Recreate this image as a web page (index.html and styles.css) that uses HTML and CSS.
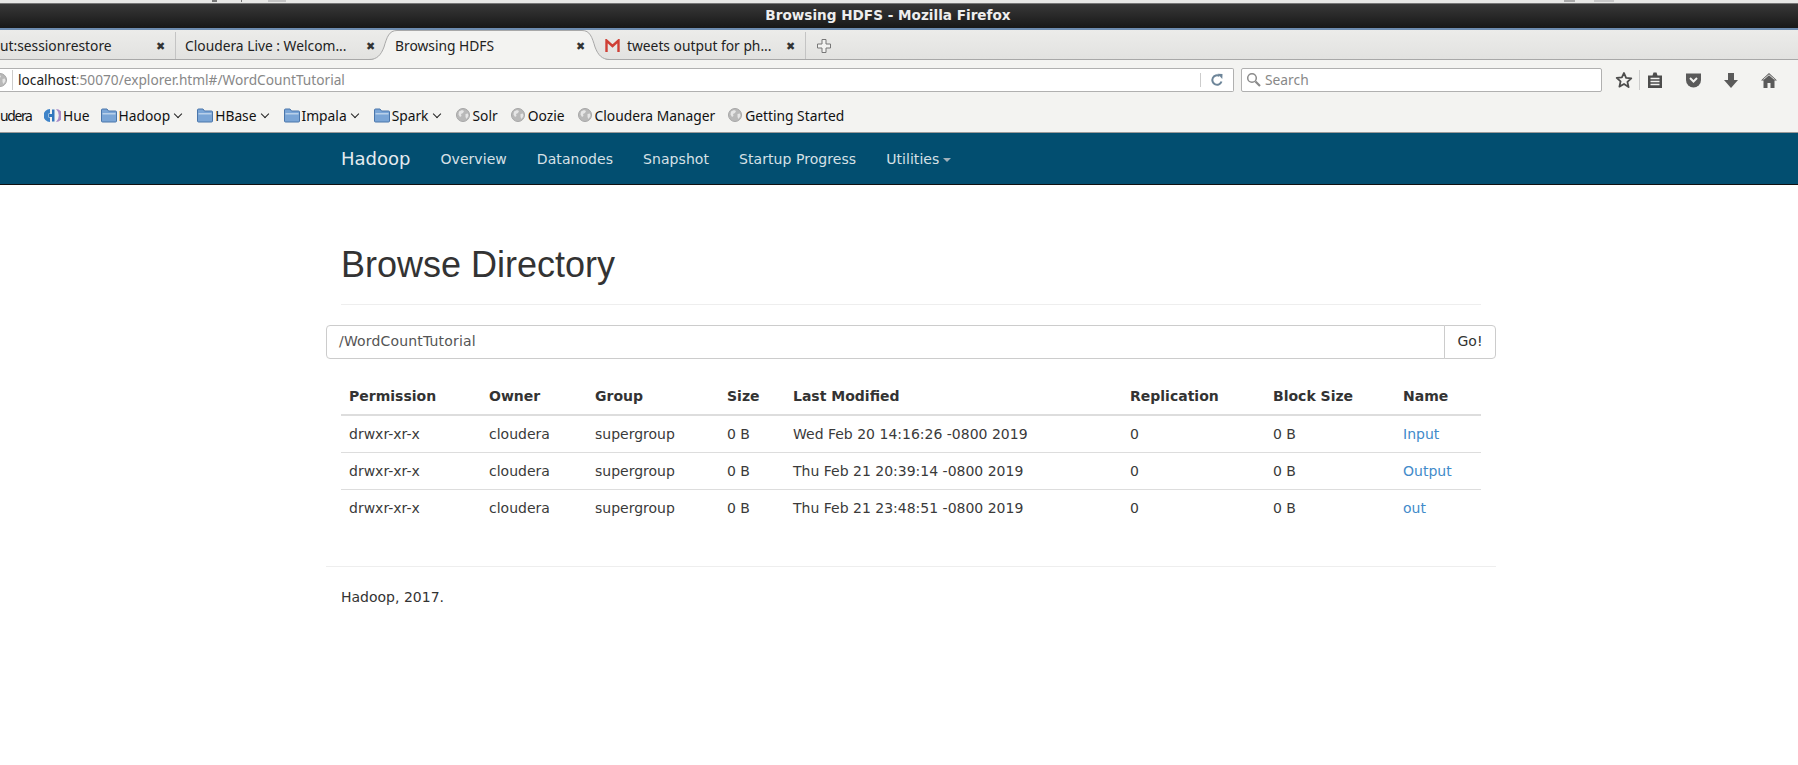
FILE: index.html
```html
<!DOCTYPE html>
<html lang="en">
<head>
    <meta charset="UTF-8">
    <meta name="viewport" content="width=device-width, initial-scale=1.0">
    <title>Browsing HDFS</title>
    <link rel="stylesheet" href="styles.css">
</head>
<body>
    <svg class="defs" width="0" height="0">
        <symbol id="globe" viewBox="0 0 14 14">
            <circle cx="7" cy="7" r="6.500" fill="#b9b9b9" stroke="#a6a6a6"/>
            <path d="M3 3.500l3-1.500 2 1-1 2-2 1 .5 2-1.500 1-1.500-2.500zM9.500 6l2.500-.5.5 2.500-2 3-1-2z" fill="#e6e6e6"/>
        </symbol>
        <symbol id="folder" viewBox="0 0 16 15">
            <path d="M.5 13V2q0-1 1-1h4.500l1.500 2h7q1 0 1 1v9q0 1-1 1h-13q-1 0-1-1z" fill="#7aa5d6" stroke="#4a76ab"/>
            <path d="M1.500 5h13v1.500h-13z" fill="#b9d0ea"/>
        </symbol>
    </svg>

    <!-- Window chrome -->
    <div class="top-strip">
        <span class="bit bit-a"></span>
        <span class="bit bit-b"></span>
        <span class="bit bit-c"></span>
        <span class="bit bit-d"></span>
        <span class="bit bit-e"></span>
    </div>
    <div class="titlebar">Browsing HDFS - Mozilla Firefox</div>

    <!-- Tabs -->
    <div class="tabbar">
        <div class="tab tab-first"><span class="tab-label">ut:sessionrestore</span><span class="tab-close">&#10006;</span></div>
        <div class="tab tab-second"><span class="tab-label">Cloudera Live : Welcom...</span><span class="tab-close">&#10006;</span></div>
        <div class="tab tab-active">
            <svg class="tab-curve" width="241" height="30" viewBox="0 0 241 30">
                <path d="M0 30 C8 30 12 25 15 17 C18 7 20 .5 28 .5 H213 C221 .5 223 7 226 17 C229 25 233 30 241 30z" fill="#f3f3f1"/>
                <path d="M0 29.500 C8 29.500 12 25 15 17 C18 7 20 .5 28 .5 H213 C221 .5 223 7 226 17 C229 25 233 29.500 241 29.500" fill="none" stroke="#a8a8a8"/>
            </svg>
            <span class="tab-label">Browsing HDFS</span><span class="tab-close">&#10006;</span>
        </div>
        <div class="tab tab-last">
            <svg class="gmail" width="15" height="13" viewBox="0 0 15 13"><path d="M1.500 13V1.500L7.500 7l6-5.500V13" fill="none" stroke="#cf3f35" stroke-width="2.400"/></svg>
            <span class="tab-label">tweets output for ph...</span><span class="tab-close">&#10006;</span>
        </div>
        <div class="tab-new">
            <svg width="14" height="14" viewBox="0 0 14 14"><path d="M5 .5h4v4.500h4.500v4H9v4.500H5V9H.5V5H5z" fill="#f3f3f1" stroke="#777"/></svg>
        </div>
    </div>

    <!-- Address bar -->
    <div class="toolbar">
        <div class="urlbar">
            <svg class="globe-url" width="14" height="14"><use href="#globe"/></svg>
            <span class="url-text">localhost<span class="url-rest">:50070/explorer.html#/WordCountTutorial</span></span>
            <span class="reload">
                <svg width="14" height="14" viewBox="0 0 14 14"><path d="M11.500 8.500A4.700 4.700 0 1 1 9.500 3" fill="none" stroke="#6d8599" stroke-width="2"/><path d="M7.500 .8l5 .2-.2 5z" fill="#6d8599"/></svg>
            </span>
        </div>
        <div class="searchbar">
            <svg width="15" height="15" viewBox="0 0 15 15"><circle cx="6" cy="6" r="4.300" fill="none" stroke="#8a8a8a" stroke-width="1.500"/><path d="M9.500 9.500l4.500 4.500" stroke="#8a8a8a" stroke-width="2.200"/></svg>
            <span class="search-text">Search</span>
        </div>
        <div class="tool-icons">
            <svg class="icon-star" width="18" height="18" viewBox="0 0 18 18"><path d="M9 2l2.100 4.900 5.200.5-3.900 3.500 1.200 5.200L9 13l-4.600 2.600 1.200-5.200-3.900-3.500 5.200-.5z" fill="none" stroke="#4c4c4c" stroke-width="1.800" stroke-linejoin="round"/></svg>
            <span class="tool-sep"></span>
            <svg class="icon-list" width="16" height="18" viewBox="0 0 16 18"><path d="M1 4.500h4.500L6.500 1.500h3l1 3H15V17H1z" fill="#4c4c4c"/><path d="M3.500 7.500h9M3.500 10.500h9M3.500 13.500h9" stroke="#f3f3f1" stroke-width="1.300"/></svg>
            <svg class="icon-pocket" width="17" height="16" viewBox="0 0 17 16"><path d="M1 1.500h15V8a7.500 7.500 0 0 1-15 0z" fill="#5a5a5a"/><path d="M5 6l3.500 3.500L12 6" fill="none" stroke="#f3f3f1" stroke-width="2"/></svg>
            <svg class="icon-down" width="16" height="17" viewBox="0 0 16 17"><path d="M5 1h6v7h4l-7 8-7-8h4z" fill="#5a5a5a"/></svg>
            <svg class="icon-home" width="18" height="17" viewBox="0 0 18 17"><path d="M9 1L1 8.500h2.500V16h4v-5h3v5h4V8.500H17z" fill="#5a5a5a"/><path d="M3.500 7.500L9 2.800l5.500 4.700" fill="none" stroke="#f3f3f1" stroke-width=".9"/></svg>
        </div>
    </div>

    <!-- Bookmarks -->
    <div class="bookmarks">
        <span class="bm bm-cut">udera</span>
        <span class="bm bm-hue">
            <svg width="17" height="15" viewBox="0 0 17 15"><path d="M6 1A6.500 6.500 0 0 0 6 14V9.500H4.500v-4H6z" fill="#3d83c9"/><path d="M8 1.500h2.500v12H8zM5 6h4v3H5z" fill="#3277bd"/><path d="M12 1a6.500 6.500 0 0 1 0 13 9 9 0 0 0 0-13z" fill="#a98ac7"/></svg>
            Hue
        </span>
        <span class="bm"><svg class="folder" width="16" height="15"><use href="#folder"/></svg>Hadoop<span class="chev"></span></span>
        <span class="bm"><svg class="folder" width="16" height="15"><use href="#folder"/></svg>HBase<span class="chev"></span></span>
        <span class="bm"><svg class="folder" width="16" height="15"><use href="#folder"/></svg>Impala<span class="chev"></span></span>
        <span class="bm"><svg class="folder" width="16" height="15"><use href="#folder"/></svg>Spark<span class="chev"></span></span>
        <span class="bm bm-site"><svg width="14" height="14"><use href="#globe"/></svg>Solr</span>
        <span class="bm bm-site"><svg width="14" height="14"><use href="#globe"/></svg>Oozie</span>
        <span class="bm bm-site"><svg width="14" height="14"><use href="#globe"/></svg>Cloudera Manager</span>
        <span class="bm bm-site"><svg width="14" height="14"><use href="#globe"/></svg>Getting Started</span>
    </div>

    <!-- Hadoop navbar -->
    <nav class="navbar">
        <div class="nav-inner">
            <a class="brand">Hadoop</a>
            <a class="nav-link">Overview</a>
            <a class="nav-link">Datanodes</a>
            <a class="nav-link">Snapshot</a>
            <a class="nav-link">Startup Progress</a>
            <a class="nav-link">Utilities <span class="caret"></span></a>
        </div>
    </nav>

    <div class="container">
        <div class="page-header">
            <h1>Browse Directory</h1>
        </div>

        <div class="input-group">
            <div class="path-input">/WordCountTutorial</div>
            <button class="go-btn">Go!</button>
        </div>

        <table class="files">
            <thead>
                <tr>
                    <th class="c-perm">Permission</th>
                    <th class="c-owner">Owner</th>
                    <th class="c-group">Group</th>
                    <th class="c-size">Size</th>
                    <th class="c-date">Last Modified</th>
                    <th class="c-repl">Replication</th>
                    <th class="c-block">Block Size</th>
                    <th class="c-name">Name</th>
                </tr>
            </thead>
            <tbody>
                <tr>
                    <td>drwxr-xr-x</td><td>cloudera</td><td>supergroup</td><td>0 B</td>
                    <td>Wed Feb 20 14:16:26 -0800 2019</td><td>0</td><td>0 B</td><td><a>Input</a></td>
                </tr>
                <tr>
                    <td>drwxr-xr-x</td><td>cloudera</td><td>supergroup</td><td>0 B</td>
                    <td>Thu Feb 21 20:39:14 -0800 2019</td><td>0</td><td>0 B</td><td><a>Output</a></td>
                </tr>
                <tr>
                    <td>drwxr-xr-x</td><td>cloudera</td><td>supergroup</td><td>0 B</td>
                    <td>Thu Feb 21 23:48:51 -0800 2019</td><td>0</td><td>0 B</td><td><a>out</a></td>
                </tr>
            </tbody>
        </table>

        <hr class="foot-line">
        <p class="footer">Hadoop, 2017.</p>
    </div>
</body>
</html>
```

FILE: styles.css
```css
* {
    box-sizing: border-box;
}
body {
    margin: 0;
    height: 765px;
    overflow: hidden;
    background: white;
    font-family: "DejaVu Sans", sans-serif;
    font-size: 14px;
    color: #333;
}
.defs {
    display: block;
    height: 0;
}

/* window chrome */
.top-strip {
    position: relative;
    height: 4px;
    background: #e8e8e6;
    border-bottom: 1px solid #777;
}
.bit {
    position: absolute;
    top: 0;
    height: 2px;
    background: #777;
}
.bit-a { left: 212px; width: 5px; }
.bit-b { left: 241px; width: 1px; }
.bit-c { left: 268px; width: 18px; background: #c4c4c4; }
.bit-d { left: 1564px; width: 11px; background: #aaa; }
.bit-e { left: 1594px; width: 20px; background: #c8c8c8; }
.titlebar {
    height: 24px;
    padding-right: 22px;
    line-height: 22px;
    text-align: center;
    background: linear-gradient(#383838, #181818);
    color: #eee;
    font-weight: bold;
    font-size: 13.600px;
}

/* tabs */
.tabbar {
    display: flex;
    height: 32px;
    padding-top: 2px;
    background: linear-gradient(#ececea, #e2e2e0);
    border-top: 2px solid #6d8cb0;
    border-bottom: 1px solid #a8a8a8;
    font-family: "Noto Sans", sans-serif;
    font-size: 13.800px;
    color: #222;
}
.tab {
    display: flex;
    align-items: center;
    position: relative;
    height: 27px;
}
.tab-label {
    flex: 1;
    position: relative;
    white-space: nowrap;
}
.tab-close {
    position: relative;
    font-size: 11px;
    color: #333;
}
.tab-first {
    width: 176px;
    padding-right: 10px;
    border-right: 1px solid #c4c4c4;
}
.tab-second {
    width: 207px;
    padding-left: 9px;
    padding-right: 8px;
}
.tab-active {
    width: 214px;
    padding-left: 12px;
    padding-right: 12px;
}
.tab-curve {
    position: absolute;
    left: -14px;
    top: -2px;
}
.tab-last {
    width: 209px;
    padding-left: 8px;
    padding-right: 10px;
    border-right: 1px solid #c4c4c4;
}
.gmail {
    position: relative;
    margin-right: 7px;
}
.tab-new {
    display: flex;
    align-items: center;
    height: 27px;
    padding-left: 11px;
}

/* address bar */
.toolbar {
    display: flex;
    align-items: center;
    height: 38px;
    padding-top: 2px;
    background: #f3f3f1;
}
.urlbar {
    display: flex;
    align-items: center;
    width: 1234px;
    height: 24px;
    background: white;
    border: 1px solid #b0b0b0;
    border-left: none;
    border-radius: 0 2px 2px 0;
}
.globe-url {
    margin-left: -7px;
    margin-right: 5px;
}
.url-text {
    flex: 1;
    padding-left: 5px;
    padding-bottom: 1px;
    border-left: 1px solid #ccc;
    font-family: "Noto Sans", sans-serif;
    font-size: 13.700px;
    color: #222;
}
.url-rest {
    color: #888;
}
.reload {
    display: flex;
    justify-content: center;
    width: 33px;
    border-left: 1px solid #ccc;
}
.searchbar {
    display: flex;
    align-items: center;
    gap: 4px;
    width: 361px;
    height: 24px;
    margin-left: 7px;
    padding-left: 4px;
    padding-bottom: 1px;
    background: white;
    border: 1px solid #b0b0b0;
    border-radius: 2px;
    font-family: "Noto Sans", sans-serif;
    font-size: 13.800px;
    color: #888;
}
.tool-icons {
    display: flex;
    align-items: center;
    margin-left: 13px;
}
.tool-sep {
    width: 1px;
    height: 20px;
    margin: 0 7px 0 6px;
    background: #ccc;
}
.icon-pocket { margin-left: 22px; }
.icon-down { margin-left: 21px; }
.icon-home { margin-left: 21px; }

/* bookmarks */
.bookmarks {
    display: flex;
    align-items: center;
    gap: 13px;
    height: 35px;
    background: #f3f3f1;
    border-bottom: 1px solid #999;
    font-family: "Noto Sans", sans-serif;
    font-size: 13.800px;
    color: #111;
}
.bm {
    display: flex;
    align-items: center;
    gap: 2px;
}
.bm-cut {
    width: 31px;
    letter-spacing: -1.300px;
}
.bm-hue {
    margin-right: -2px;
}
.bm-site {
    gap: 3px;
}
.chev {
    width: 6px;
    height: 6px;
    margin: -3px 3px 0 3px;
    border-right: 1.800px solid #222;
    border-bottom: 1.800px solid #222;
    transform: rotate(45deg);
}

/* hadoop navbar */
.navbar {
    height: 52px;
    background: #024e70;
    border-bottom: 1px solid #111;
}
.nav-inner {
    display: flex;
    align-items: center;
    width: 1170px;
    height: 51px;
    margin-left: 326px;
    padding-left: 15px;
}
.brand {
    margin-right: 15px;
    font-size: 18px;
    color: #e4ebef;
}
.nav-link {
    padding: 0 15px;
    letter-spacing: .06px;
    color: #d6e0e6;
}
.caret {
    display: inline-block;
    margin-left: -1px;
    vertical-align: middle;
    border-top: 4px solid #9fb0ba;
    border-left: 4px solid transparent;
    border-right: 4px solid transparent;
}

/* page */
.container {
    width: 1170px;
    margin-left: 326px;
}
.page-header {
    margin: 0 15px;
    padding-top: 60px;
    padding-bottom: 19px;
    border-bottom: 1px solid #eee;
}
h1 {
    margin: 0;
    font-family: "Liberation Sans", sans-serif;
    font-size: 36px;
    font-weight: normal;
    line-height: 40px;
}
.input-group {
    display: flex;
    height: 34px;
    margin-top: 20px;
}
.path-input {
    flex: 1;
    padding: 5px 12px;
    line-height: 20px;
    letter-spacing: .17px;
    color: #555;
    border: 1px solid #ccc;
    border-radius: 4px 0 0 4px;
}
.go-btn {
    width: 52px;
    margin-left: -1px;
    padding-bottom: 3px;
    background: white;
    border: 1px solid #ccc;
    border-radius: 0 4px 4px 0;
    font-family: inherit;
    font-size: 14px;
    color: #333;
}
.files {
    width: 1140px;
    margin: 19px 15px 0;
    table-layout: fixed;
    border-collapse: collapse;
}
.files th, .files td {
    padding: 8px;
    line-height: 20px;
    text-align: left;
}
.files th {
    border-bottom: 2px solid #ddd;
}
.files td {
    border-top: 1px solid #ddd;
    color: #3a3a3a;
}
.files tbody tr:first-child td {
    border-top: none;
}
.files a {
    color: #428bca;
}
.c-perm { width: 140px; }
.c-owner { width: 106px; }
.c-group { width: 132px; }
.c-size { width: 66px; }
.c-date { width: 337px; }
.c-repl { width: 143px; }
.c-block { width: 130px; }
.c-name { width: 86px; }
.foot-line {
    margin: 40px 0 0;
    border: none;
    border-top: 1px solid #eee;
}
.footer {
    margin: 20px 15px 0;
    line-height: 20px;
}
```
